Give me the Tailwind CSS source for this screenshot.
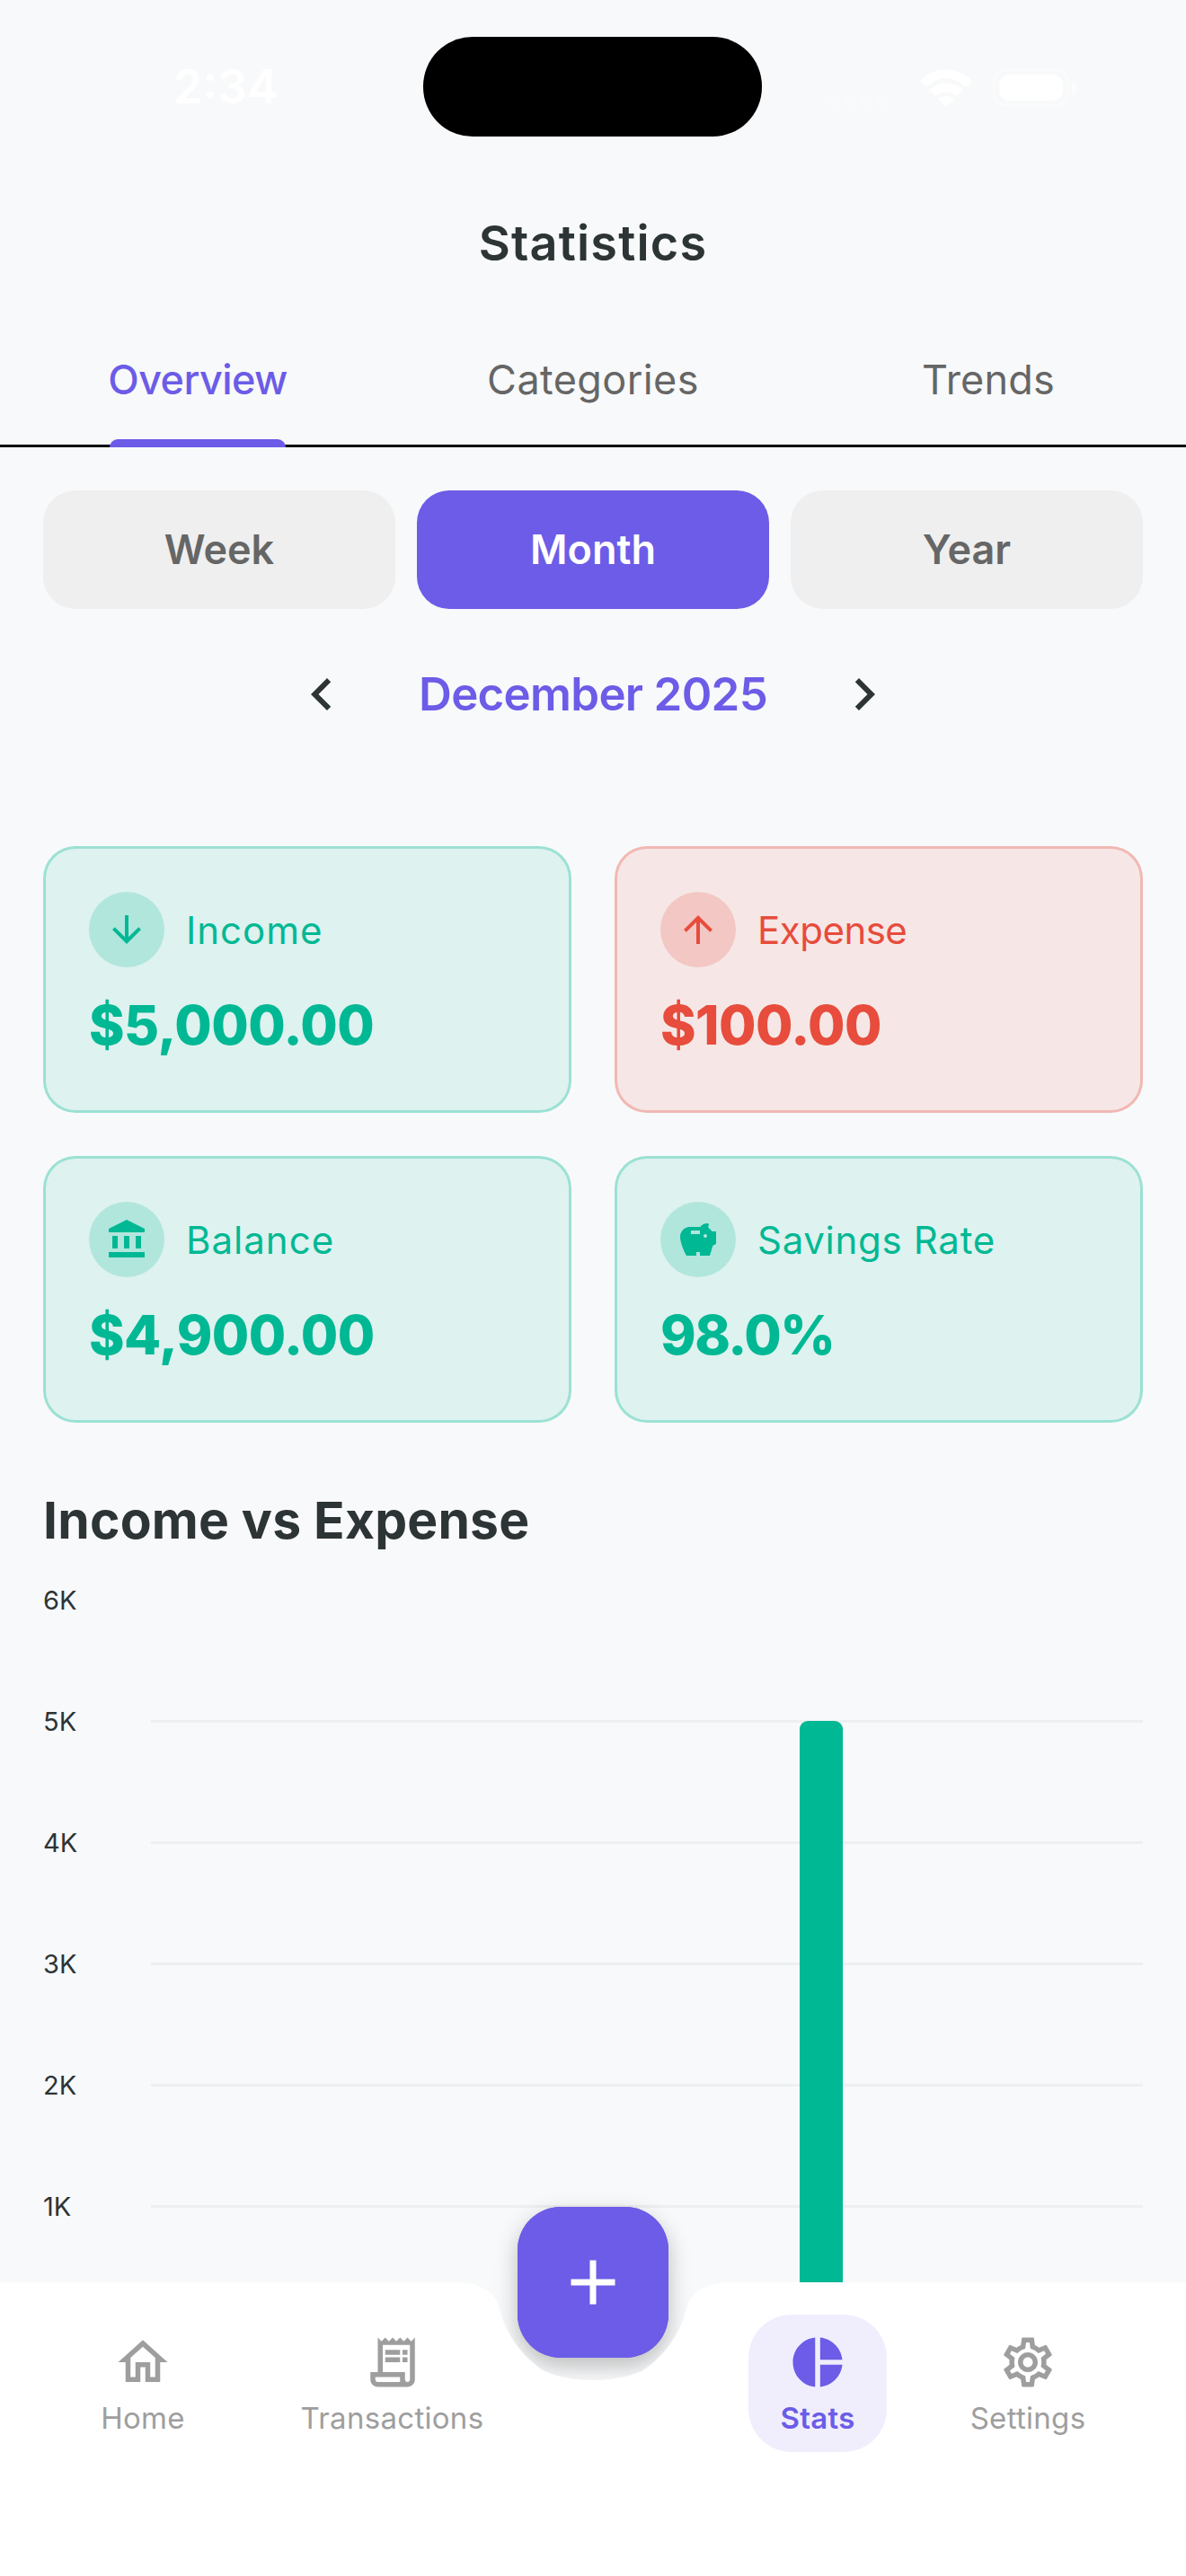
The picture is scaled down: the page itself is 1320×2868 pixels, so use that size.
<!DOCTYPE html>
<html lang="en">
<head>
    <meta charset="UTF-8">
    <meta name="viewport" content="width=device-width, initial-scale=1.0">
    <title>Statistics</title>
    <script src="https://cdn.jsdelivr.net/npm/@tailwindcss/browser@4"></script>
</head>
<body class="bg-[#F8F9FA]">
    <div class="relative w-[1320px] h-[2868px] overflow-hidden bg-[#F8F9FA] font-['Inter',sans-serif] text-[#2D3436]">

        <!-- status bar -->
        <div class="relative h-[193px] flex items-center">
            <span class="pl-[193px] text-[52px] leading-none font-semibold text-white">2:34</span>
            <div class="absolute left-[471px] top-[41px] w-[377px] h-[111px] rounded-[55px] bg-black"></div>
            <div class="ml-auto pr-[122px] flex items-end gap-[23px] pt-[2px]">
                <div class="flex items-end gap-[6px] mr-[14px] opacity-20">
                    <div class="w-[12px] h-[8px] bg-white"></div>
                    <div class="w-[12px] h-[10px] bg-white"></div>
                    <div class="w-[12px] h-[10px] bg-white"></div>
                    <div class="w-[12px] h-[10px] bg-white"></div>
                </div>
                <svg class="w-[58px] h-[42px]" viewBox="0 0 58 42" fill="#fff">
                    <path d="M0 13C16-4 42-4 58 13l-7 7C37 7 21 7 7 20z"/>
                    <path d="M10 23c11-10 27-10 38 0l-7 7c-8-6-16-6-24 0z"/>
                    <path d="M20 33c5-4 13-4 18 0l-9 9z"/>
                </svg>
                <div class="flex items-center gap-[3px]">
                    <div class="w-[85px] h-[43px] rounded-[16px] border-[3px] border-white/40 p-[4px]">
                        <div class="w-full h-full rounded-[11px] bg-white"></div>
                    </div>
                    <div class="w-[5px] h-[14px] rounded-r-[4px] bg-white/50"></div>
                </div>
            </div>
        </div>

        <h1 class="h-[154px] flex items-center justify-center text-[54px] font-semibold tracking-[1.2px]">Statistics</h1>

        <!-- tabs -->
        <div class="h-[151px] grid grid-cols-3 border-b-[3px] border-black text-[45px] text-[#666666]">
            <div class="relative flex items-center justify-center pt-[4px] font-medium tracking-[-0.6px] text-[#6C5CE7]">
                Overview
                <div class="absolute left-[122px] bottom-[-3px] w-[196px] h-[9px] rounded-t-[9px] bg-[#6C5CE7]"></div>
            </div>
            <div class="flex items-center justify-center pt-[4px] tracking-[0.4px]">Categories</div>
            <div class="flex items-center justify-center pt-[4px] tracking-[0.2px]">Trends</div>
        </div>

        <!-- period selector -->
        <div class="mt-12 px-12 h-[132px] flex gap-6 text-[45px] font-semibold">
            <div class="flex-1 flex items-center justify-center rounded-[36px] bg-[#EFEFEF] text-[#666666]">Week</div>
            <div class="flex-1 flex items-center justify-center rounded-[36px] bg-[#6C5CE7] text-white">Month</div>
            <div class="flex-1 flex items-center justify-center rounded-[36px] bg-[#EFEFEF] text-[#666666]">Year</div>
        </div>

        <div class="h-[190px] flex items-center justify-center gap-[72px]">
            <svg class="w-[72px] h-[72px]" viewBox="0 0 24 24" fill="#2D3436"><path d="M15.41 7.41 14 6l-6 6 6 6 1.41-1.41L10.83 12z"/></svg>
            <span class="text-[51px] font-semibold tracking-[-0.7px] text-[#6C5CE7] w-[388px] text-center whitespace-nowrap">December 2025</span>
            <svg class="w-[72px] h-[72px]" viewBox="0 0 24 24" fill="#2D3436"><path d="M10 6 8.59 7.41 13.17 12l-4.58 4.59L10 18l6-6z"/></svg>
        </div>

        <!-- summary cards -->
        <div class="mt-[74px] px-12 grid grid-cols-2 gap-12">
            <div class="h-[297px] rounded-[36px] border-[3px] border-[#00B894]/30 bg-[#00B894]/10 p-12 text-[#00B894]">
                <div class="flex items-center gap-6">
                    <div class="w-[84px] h-[84px] rounded-full bg-[#00B894]/20 flex items-center justify-center">
                        <svg class="w-12 h-12" viewBox="0 0 24 24" fill="currentColor"><path d="M20 12l-1.41-1.41L13 16.17V4h-2v12.17l-5.58-5.59L4 12l8 8 8-8z"/></svg>
                    </div>
                    <span class="text-[42px] tracking-[1px]">Income</span>
                </div>
                <div class="mt-[26px] text-[60px] leading-[76px] font-extrabold tracking-[-0.5px]">$5,000.00</div>
            </div>
            <div class="h-[297px] rounded-[36px] border-[3px] border-[#E74C3C]/30 bg-[#E74C3C]/10 p-12 text-[#E74C3C]">
                <div class="flex items-center gap-6">
                    <div class="w-[84px] h-[84px] rounded-full bg-[#E74C3C]/20 flex items-center justify-center">
                        <svg class="w-12 h-12" viewBox="0 0 24 24" fill="currentColor"><path d="M4 12l1.41 1.41L11 7.83V20h2V7.83l5.58 5.59L20 12l-8-8-8 8z"/></svg>
                    </div>
                    <span class="text-[42px] tracking-[-0.5px]">Expense</span>
                </div>
                <div class="mt-[26px] text-[60px] leading-[76px] font-extrabold tracking-[-0.5px]">$100.00</div>
            </div>
            <div class="h-[297px] rounded-[36px] border-[3px] border-[#00B894]/30 bg-[#00B894]/10 p-12 text-[#00B894]">
                <div class="flex items-center gap-6">
                    <div class="w-[84px] h-[84px] rounded-full bg-[#00B894]/20 flex items-center justify-center">
                        <svg class="w-12 h-12" viewBox="0 0 24 24" fill="currentColor"><path d="M4 10h3v7H4zM10.5 10h3v7h-3zM2 19h20v3H2zM17 10h3v7h-3zM12 1L2 6v2h20V6z"/></svg>
                    </div>
                    <span class="text-[42px] tracking-[1px]">Balance</span>
                </div>
                <div class="mt-[26px] text-[60px] leading-[76px] font-extrabold tracking-[-0.5px]">$4,900.00</div>
            </div>
            <div class="h-[297px] rounded-[36px] border-[3px] border-[#00B894]/30 bg-[#00B894]/10 p-12 text-[#00B894]">
                <div class="flex items-center gap-6">
                    <div class="w-[84px] h-[84px] rounded-full bg-[#00B894]/20 flex items-center justify-center">
                        <svg class="w-12 h-12" viewBox="0 0 24 24" fill="currentColor"><path d="M19.83 7.5l-2.27-2.27c.07-.42.18-.81.32-1.15.25-.6-.2-1.08-.7-1.08-1.64 0-3.09.79-4 2H7.5C4.46 5 2 7.46 2 10.5 2 13 3.5 17.5 5.5 21H11v-2h2v2h5.5l1.68-5.59L22 14.5v-7h-2.17zM13 9H8V7h5v2zm3 2c-.55 0-1-.45-1-1s.45-1 1-1 1 .45 1 1-.45 1-1 1z"/></svg>
                    </div>
                    <span class="text-[42px] tracking-[0.7px]">Savings Rate</span>
                </div>
                <div class="mt-[26px] text-[60px] leading-[76px] font-extrabold tracking-[-1.5px]">98.0%</div>
            </div>
        </div>

        <h2 class="h-[130px] pt-[87px] px-12 text-[57px] leading-[44px] font-bold tracking-[0.2px]">Income vs Expense</h2>

        <!-- chart -->
        <div class="relative text-[29px]">
            <div class="h-[135px] flex items-center px-12"><span class="w-[120px]">6K</span></div>
            <div class="h-[135px] flex items-center px-12"><span class="w-[120px]">5K</span><div class="flex-1 h-[3px] bg-[#EEEFF1]"></div></div>
            <div class="h-[135px] flex items-center px-12"><span class="w-[120px]">4K</span><div class="flex-1 h-[3px] bg-[#EEEFF1]"></div></div>
            <div class="h-[135px] flex items-center px-12"><span class="w-[120px]">3K</span><div class="flex-1 h-[3px] bg-[#EEEFF1]"></div></div>
            <div class="h-[135px] flex items-center px-12"><span class="w-[120px]">2K</span><div class="flex-1 h-[3px] bg-[#EEEFF1]"></div></div>
            <div class="h-[135px] flex items-center px-12"><span class="w-[120px]">1K</span><div class="flex-1 h-[3px] bg-[#EEEFF1]"></div></div>
            <div class="absolute left-[890px] top-[202px] w-[48px] h-[640px] rounded-t-[9px] bg-[#00B894]"></div>
        </div>

        <!-- bottom nav -->
        <div class="absolute left-0 bottom-0 w-[1320px] h-[327px]">
            <div class="absolute left-[576px] top-[-84px] w-[168px] h-[168px] rounded-[48px] bg-[#6C5CE7] shadow-[0_9px_24px_rgba(0,0,0,0.25)]"></div>
            <svg class="absolute left-0 top-0 w-[1320px] h-[327px]" viewBox="0 0 1320 327" fill="#fff">
                <path d="M0 0H505C530 0 548 7 555 26C560 49 575 79 606 99C625 107 645 109 660 109C675 109 695 107 714 99C745 79 760 49 765 26C772 7 790 0 815 0H1320V327H0z"/>
            </svg>
            <div class="absolute left-[576px] top-[-84px] w-[168px] h-[168px] rounded-[48px] bg-[#6C5CE7] flex items-center justify-center">
                <svg class="w-[84px] h-[84px]" viewBox="0 0 24 24" fill="#fff"><path d="M19 13h-6v6h-2v-6H5v-2h6V5h2v6h6v2z"/></svg>
            </div>
            <div class="relative flex pt-9 pl-[78px] text-[33px] leading-[58px] text-[#9E9E9E] tracking-[0.3px]">
                <div class="w-[162px] h-[153px] pt-5 flex flex-col items-center">
                    <svg class="w-[66px] h-[66px]" viewBox="0 0 24 24" fill="#9E9E9E"><path d="M12 5.69l5 4.5V18h-2v-6H9v6H7v-7.81l5-4.5M12 3L2 12h3v8h6v-6h2v6h6v-8h3L12 3z"/></svg>
                    <span>Home</span>
                </div>
                <div class="ml-[61px] w-[271px] h-[153px] pt-5 flex flex-col items-center">
                    <svg class="w-[66px] h-[66px]" viewBox="0 0 24 24" fill="#9E9E9E">
                        <path d="M19.5 3.5L18 2l-1.5 1.5L15 2l-1.5 1.5L12 2l-1.5 1.5L9 2 7.5 3.5 6 2v14H3v3c0 1.66 1.34 3 3 3h12c1.66 0 3-1.34 3-3V2l-1.5 1.5zM15 20H6c-.55 0-1-.45-1-1v-1h10v2zm4-1c0 .55-.45 1-1 1s-1-.45-1-1v-3H8V5h11v14z"/>
                        <path d="M9 7h6v2H9zM16 7h2v2h-2zM9 10h6v2H9zM16 10h2v2h-2z"/>
                    </svg>
                    <span>Transactions</span>
                </div>
                <div class="ml-[261px] w-[154px] h-[153px] pt-5 flex flex-col items-center rounded-[48px] bg-[#6C5CE7]/10 text-[#6C5CE7] font-semibold">
                    <svg class="w-[66px] h-[66px]" viewBox="0 0 24 24" fill="#6C5CE7"><path d="M11 2v20c-5.07-.5-9-4.79-9-10s3.93-9.5 9-10zm2.03 0v8.99H22c-.47-4.74-4.24-8.52-8.97-8.99zm0 11.01V22c4.74-.47 8.5-4.25 8.97-8.99h-8.97z"/></svg>
                    <span>Stats</span>
                </div>
                <div class="ml-[59px] w-[196px] h-[153px] pt-5 flex flex-col items-center">
                    <svg class="w-[66px] h-[66px]" viewBox="0 0 24 24" fill="#9E9E9E"><path d="M19.43 12.98c.04-.32.07-.64.07-.98 0-.34-.03-.66-.07-.98l2.11-1.65c.19-.15.24-.42.12-.64l-2-3.46c-.09-.16-.26-.25-.44-.25-.06 0-.12.01-.17.03l-2.49 1c-.52-.4-1.08-.73-1.69-.98l-.38-2.65C14.46 2.18 14.25 2 14 2h-4c-.25 0-.46.18-.49.42l-.38 2.65c-.61.25-1.17.59-1.69.98l-2.49-1c-.06-.02-.12-.03-.18-.03-.17 0-.34.09-.43.25l-2 3.46c-.13.22-.07.49.12.64l2.11 1.65c-.04.32-.07.65-.07.98 0 .33.03.66.07.98l-2.11 1.65c-.19.15-.24.42-.12.64l2 3.46c.09.16.26.25.44.25.06 0 .12-.01.17-.03l2.49-1c.52.4 1.08.73 1.69.98l.38 2.65c.03.24.24.42.49.42h4c.25 0 .46-.18.49-.42l.38-2.65c.61-.25 1.17-.59 1.69-.98l2.49 1c.06.02.12.03.18.03.17 0 .34-.09.43-.25l2-3.46c.12-.22.07-.49-.12-.64l-2.11-1.65zm-1.98-1.71c.04.31.05.52.05.73 0 .21-.02.43-.05.73l-.14 1.13.89.7 1.08.84-.7 1.21-1.27-.51-1.04-.42-.9.68c-.43.32-.84.56-1.25.73l-1.06.43-.16 1.13-.2 1.35h-1.4l-.19-1.35-.16-1.13-1.06-.43c-.43-.18-.83-.41-1.23-.71l-.91-.7-1.06.43-1.27.51-.7-1.21 1.08-.84.89-.7-.14-1.13c-.03-.31-.05-.54-.05-.74s.02-.43.05-.73l.14-1.13-.89-.7-1.08-.84.7-1.21 1.27.51 1.04.42.9-.68c.43-.32.84-.56 1.25-.73l1.06-.43.16-1.13.2-1.35h1.39l.19 1.35.16 1.13 1.06.43c.43.18.83.41 1.23.71l.91.7 1.06-.43 1.27-.51.7 1.21-1.07.85-.89.7.14 1.13zM12 8c-2.21 0-4 1.79-4 4s1.79 4 4 4 4-1.79 4-4-1.79-4-4-4zm0 6c-1.1 0-2-.9-2-2s.9-2 2-2 2 .9 2 2-.9 2-2 2z"/></svg>
                    <span>Settings</span>
                </div>
            </div>
        </div>
    </div>
</body>
</html>
